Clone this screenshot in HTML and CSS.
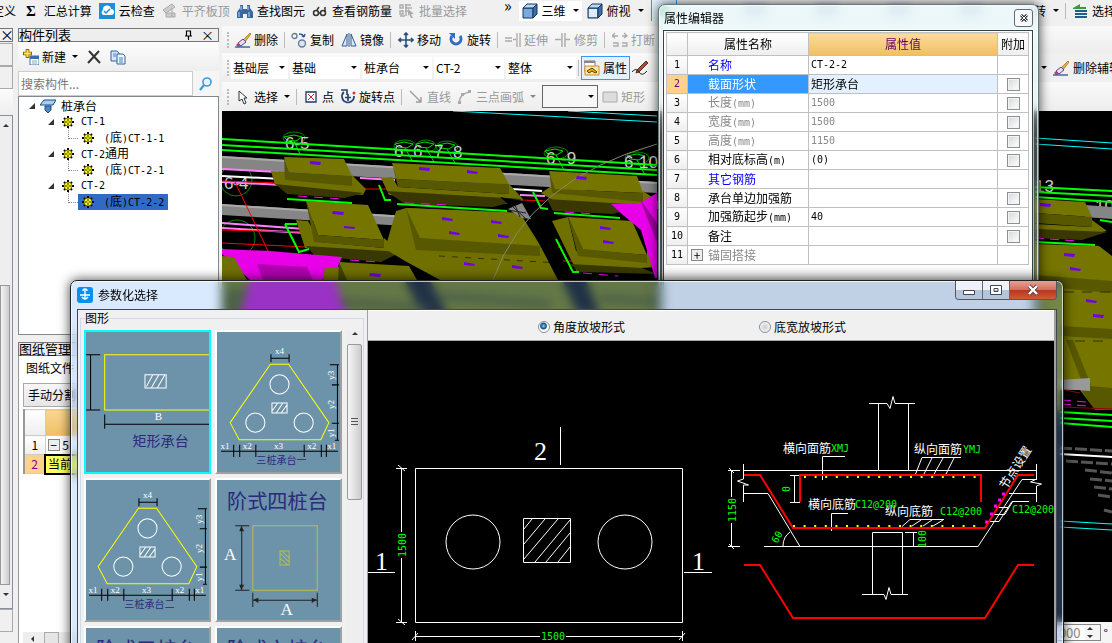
FILE: index.html
```html
<!DOCTYPE html>
<html lang="zh-CN">
<head>
  <meta charset="UTF-8">
  <meta name="viewport" content="width=device-width, initial-scale=1.0">
  <title>参数化选择</title>
  <link rel="stylesheet" href="styles.css">
</head>
<body>
  <!-- shared icons -->
  <svg width="0" height="0" class="defs">
    <symbol id="i-brush" viewBox="0 0 16 16"><path d="M15 1l-7 7 2 2 6-8z" fill="#e8b030" stroke="#8a6414" stroke-width=".6"/><path d="M8 7l3 3-5 4-3-3z" fill="#e7dff0" stroke="#56408a"/><path d="M3 11l3 3-3 1-2-2z" fill="#c33a7a"/><path d="M0 15h15" stroke="#2f5f9c" stroke-width="1.4"/></symbol>
    <symbol id="i-gear" viewBox="0 0 12 12"><path d="M6 0v12M0 6h12M2 2l8 8M10 2l-8 8" stroke="#000" stroke-width="2"/><circle cx="6" cy="6" r="4" fill="#ff0" stroke="#333" stroke-width=".6"/><path d="M6 3v6M3 6h6" stroke="#222"/><circle cx="6" cy="6" r="1" fill="#ff0"/></symbol>
    <symbol id="i-cube" viewBox="0 0 16 16"><path d="M1 5h10v10H1z" fill="#78aadb" stroke="#17365d"/><path d="M1 5l4-4h10l-4 4z" fill="#b9d8f4" stroke="#17365d"/><path d="M11 5l4-4v10l-4 4z" fill="#3c6fa8" stroke="#17365d"/></symbol>
    <symbol id="t-tri" viewBox="0 0 122 139">
      <path d="M53 32h18l40 58-8 17H22l-9-17z" fill="none" stroke="#ff0"/>
      <g fill="none" stroke="#fff"><circle cx="62" cy="52" r="9.5"/><circle cx="38" cy="90" r="9.5"/><circle cx="86" cy="90" r="9.5"/><path d="M54.500 70.500h15v10h-15zM55 78l5-7M59 80l6-9M64 80l5-7"/></g>
      <path d="M53 26h18M53.500 22v8M71.500 22v8M119.500 32v75M112 32.500h9M114 52.500h7M114 90.500h7M117 107.500h4M4 118.500h116M16.500 112v12M22.500 112v12M38.500 112v12M86.500 112v12M103.500 112v12M108.500 112v12" stroke="#000" fill="none"/>
      <g fill="#fff" font-size="9" font-family="Liberation Serif, serif" text-anchor="middle">
        <text x="62" y="22">x4</text><text x="8" y="116">x1</text><text x="30" y="116">x2</text><text x="61" y="116">x3</text><text x="94" y="116">x2</text><text x="114" y="116">x1</text>
        <text transform="translate(116 43) rotate(-90)">y3</text><text transform="translate(116 72) rotate(-90)">y2</text><text transform="translate(116 100) rotate(-90)">y1</text>
      </g>
    </symbol>
  </svg>

  <header class="toolbar top-bar">
    <button class="tool first">定义</button>
    <button class="tool sum"><b>Σ</b>汇总计算</button>
    <button class="tool"><svg viewBox="0 0 16 16"><path fill="#1c8fd6" d="M0 0h16v16H0z"/><path d="M4 12a3 3 0 0 1 0-5 4 4 0 0 1 8-1 3 3 0 0 1 0 6z" fill="#fff"/><path d="M5 8l2 2 4-4" stroke="#1c8fd6" fill="none" stroke-width="1.500"/></svg>云检查</button>
    <button class="tool off"><svg viewBox="0 0 16 16"><path d="M1 7l9-6 3 3-9 6zM4 10h9v4H4zM10 5v9" fill="#ccc" stroke="#aaa"/></svg>平齐板顶</button>
    <button class="tool"><svg viewBox="0 0 16 16"><path d="M3 2h3v4h4V2h3v3l3 4v6h-6v-4H6v4H0V9l3-4z" fill="#39679f"/><path d="M2 9v5M4 3v4M12 9v5M11 3v4" stroke="#b9d4f2"/></svg>查找图元</button>
    <button class="tool"><svg viewBox="0 0 16 16"><g fill="none" stroke="#333" stroke-width="1.500"><circle cx="4" cy="10" r="2.500"/><circle cx="11" cy="10" r="2.500"/><path d="M6 10h3M5 7l2-3M13 9V4"/></g></svg>查看钢筋量</button>
    <button class="tool off"><svg viewBox="0 0 16 16"><path d="M1 2h3v3H1zM1 8h3v3H1zM1 13h5M6 2h6M6 5h7M6 8h3M7 1v12" fill="none" stroke="#aaa" stroke-width="1.400"/><path d="M9 6l6 5-3 0 2 4-2 0-2-4-1 2z" fill="#aaa"/></svg>批量选择</button>
    <span class="more">»</span>
    <button class="tool drop view"><svg viewBox="0 0 16 16"><use href="#i-cube"/></svg>三维</button>
    <button class="tool drop"><svg viewBox="0 0 16 16"><use href="#i-cube"/><path d="M2 6h8v8H2z" fill="#dcecf9"/></svg>俯视</button>
    <button class="tool active" aria-label="动态观察"><svg viewBox="0 0 16 16"><circle cx="8" cy="8" r="6" fill="#2a9a5c"/></svg></button>
    <div class="blurry"><i></i><i></i><i></i><i></i><i></i></div>
    <div class="right-tools r1"><button class="tool drop">转</button><span class="sep"></span>
      <button class="tool"><svg viewBox="0 0 16 16"><path d="M1 5l7-4v3h6v2H1z" fill="#3b9a3b"/><path d="M3 8h12M3 11h12M3 14h12" stroke="#225c92" stroke-width="2"/></svg>选择</button></div>
  </header>

  <main class="workspace">
    <aside class="strip">
      <div class="strip-close">×</div>
      <div class="strip-row"></div><div class="strip-row"></div><div class="strip-row soft"></div>
      <div class="strip-scroll"><span class="up"></span><span class="thumb"></span><span class="down"></span></div>
      <div class="strip-row"></div>
    </aside>

    <aside class="panels">
      <section class="component-panel">
        <h2 class="panel-title">构件列表<span class="pin"><svg viewBox="0 0 10 10"><path d="M2 6h7M3.500 6V1h4v5M5.500 6v4" fill="none" stroke="#000" stroke-width="1.200"/></svg></span><span>×</span></h2>
        <div class="panel-tools">
          <button class="tool drop"><svg viewBox="0 0 16 16"><path d="M7 7h9v9H7z" fill="#fff" stroke="#3b6ea8"/><path d="M7 8.500h9" stroke="#3b6ea8" stroke-width="3"/><path d="M9 12h5M9 14h5" stroke="#8ab"/><path d="M4.500 0v9M0 4.500h9" stroke="#866400" stroke-width="3.600"/><path d="M4.500 1v7M1 4.500h7" stroke="#ffe34a" stroke-width="2"/></svg>新建</button>
          <button class="tool" aria-label="删除"><svg viewBox="0 0 16 16"><path d="M3 2l11 12M13 2L2 14" stroke="#333" stroke-width="2"/></svg></button>
          <button class="tool" aria-label="复制"><svg viewBox="0 0 16 16"><path d="M1 2h6l2 2v8H1z" fill="#d8e8f8" stroke="#2e63a0"/><path d="M7 5h6l2 2v8H7z" fill="#eef6ff" stroke="#2e63a0"/><path d="M9 9h4M9 11h4M9 13h4M3 5h3M3 7h3" stroke="#4a82bf"/></svg></button>
        </div>
        <div class="search">
          <input type="text" placeholder="搜索构件..." aria-label="搜索构件">
          <button aria-label="搜索"><svg viewBox="0 0 16 16"><circle cx="9" cy="6" r="4" fill="#e8f6ff" stroke="#3b9bd8" stroke-width="1.600"/><path d="M6 9l-4 5" stroke="#3b9bd8" stroke-width="2.200"/></svg></button>
        </div>
        <ul class="tree">
          <li><i class="open"></i><svg viewBox="0 0 16 14"><path d="M0 6l4-5h12l-3 5H0z" fill="#a9cdf0" stroke="#174a86"/><path d="M5 7h6v4l-3 3-3-3z" fill="#4d88c4" stroke="#174a86"/></svg>桩承台</li>
          <li class="l2"><i class="open"></i><svg viewBox="0 0 12 12"><use href="#i-gear"/></svg><span class="n">CT-1</span></li>
          <li class="l3"><svg viewBox="0 0 12 12"><use href="#i-gear"/></svg><span><span class="n">(</span>底<span class="n">)CT-1-1</span></span></li>
          <li class="l2"><i class="open"></i><svg viewBox="0 0 12 12"><use href="#i-gear"/></svg><span><span class="n">CT-2</span>通用</span></li>
          <li class="l3"><svg viewBox="0 0 12 12"><use href="#i-gear"/></svg><span><span class="n">(</span>底<span class="n">)CT-2-1</span></span></li>
          <li class="l2"><i class="open"></i><svg viewBox="0 0 12 12"><use href="#i-gear"/></svg><span class="n">CT-2</span></li>
          <li class="l3 picked"><svg viewBox="0 0 12 12"><use href="#i-gear"/></svg><span><span class="n">(</span>底<span class="n">)CT-2-2</span></span></li>
        </ul>
      </section>
      <section class="drawing-panel">
        <h2 class="panel-title">图纸管理</h2>
        <div class="tab">图纸文件</div>
        <div class="drawing-body">
          <button class="split">手动分割</button>
          <table>
            <tr class="head"><th></th><td></td></tr>
            <tr><th>1</th><td><span class="fold">−</span> 5</td></tr>
            <tr class="cur"><th>2</th><td>当前</td></tr>
          </table>
          <div class="hscroll"><i></i><b></b></div>
        </div>
      </section>
    </aside>

    <section class="viewport">
      <div class="toolbar bar-edit">
        <span class="grip"></span>
        <button class="tool"><svg viewBox="0 0 16 16"><use href="#i-brush"/></svg>删除</button><span class="sep"></span>
        <button class="tool"><svg viewBox="0 0 16 16"><g fill="none" stroke="#6a7f96" stroke-width="1.400"><circle cx="3.500" cy="4" r="2.500"/><circle cx="11" cy="11.500" r="3.500" fill="#dbe6f0"/><path d="M8 2q4 0 5 3M13 5l-2-1M13 5l1-3" stroke="#2460a8"/></g></svg>复制</button>
        <button class="tool"><svg viewBox="0 0 16 16"><path d="M1 14L6 2v12zM10 2l5 12h-5z" fill="#dce9f5" stroke="#2c5d96"/><path d="M8 1v14" stroke="#2c5d96"/></svg>镜像</button><span class="sep"></span>
        <button class="tool"><svg viewBox="0 0 16 16"><path d="M8 1v14M1 8h14M6 3l2-2 2 2M6 13l2 2 2-2M3 6L1 8l2 2M13 6l2 2-2 2" fill="none" stroke="#29517c" stroke-width="1.600"/></svg>移动</button>
        <button class="tool"><svg viewBox="0 0 16 16"><path d="M4 4a5 5 0 1 0 8 0" fill="none" stroke="#2e6fc4" stroke-width="3"/><path d="M1 1h6v6z" fill="#2e6fc4"/></svg>旋转</button><span class="sep"></span>
        <button class="tool off"><svg viewBox="0 0 16 16"><path d="M0 6h7M0 9h7M12 1v14M15 1v14M8 7.500h3" stroke="#aaa" stroke-width="1.300"/></svg>延伸</button>
        <button class="tool off"><svg viewBox="0 0 16 16"><path d="M0 7.500h6M10 7.500h5M7 1v14M10 1v14" stroke="#aaa" stroke-width="1.400"/></svg>修剪</button><span class="sep"></span>
        <button class="tool off"><svg viewBox="0 0 16 16"><path d="M0 4h6M3 1L0 4l3 2M15 4h-5M12 1l3 3-3 2M1 11h5v3H1M10 11h5v3h-5" fill="none" stroke="#aaa" stroke-width="1.300"/></svg>打断</button>
      </div>
      <div class="toolbar bar-layer">
        <span class="grip"></span>
        <span class="combo short"><select aria-label="楼层"><option>基础层</option></select></span>
        <span class="combo"><select aria-label="类别"><option>基础</option></select></span>
        <span class="combo"><select aria-label="构件类型"><option>桩承台</option></select></span>
        <span class="combo"><select aria-label="构件"><option>CT-2</option></select></span>
        <span class="combo"><select aria-label="部位"><option>整体</option></select></span>
        <span class="sep"></span>
        <button class="tool active"><svg viewBox="0 0 16 16"><path d="M0 1h11v10H0z" fill="#fff" stroke="#777"/><path d="M0 2h11" stroke="#888" stroke-width="2"/><path d="M1 6h14v9H1z" fill="#ffe2ae" stroke="#d98c1e"/><path d="M3 11l5-3 5 4-2 1-3-2-3 2z" fill="#e1b400" stroke="#554400"/></svg>属性</button>
        <button class="tool" aria-label="编辑钢筋"><svg viewBox="0 0 16 16"><path d="M14 1L5 10l-1 3 3-1 9-9z" fill="#b04a30" stroke="#532"/><path d="M0 12q4-5 7 0t8-1" fill="none" stroke="#222"/></svg></button>
        <div class="right-tools r2"><button class="tool drop" aria-label="更多"></button><button class="tool"><svg viewBox="0 0 16 16"><use href="#i-brush"/></svg>删除辅轴</button></div>
      </div>
      <div class="toolbar bar-draw">
        <span class="grip"></span>
        <button class="tool drop"><svg viewBox="0 0 16 16"><path d="M4 2v10l3-2 2 5 2-1-2-5h3z" fill="#fff" stroke="#333"/></svg>选择</button><span class="sep"></span>
        <button class="tool"><svg viewBox="0 0 16 16"><path d="M3 3h10v10H3z" fill="#fff" stroke="#1d3767" stroke-width="1.300"/><path d="M5 5l6 6M11 5l-6 6" stroke="#c22"/></svg>点</button>
        <button class="tool"><svg viewBox="0 0 16 16"><path d="M4 3a6 6 0 1 0 10 4M1 1h6v5M8 5v7M5 8.500h6" fill="none" stroke="#27466f" stroke-width="1.700"/><circle cx="14" cy="4" r="1.500" fill="#d33"/></svg>旋转点</button><span class="sep"></span>
        <button class="tool off"><svg viewBox="0 0 16 16"><path d="M2 2l11 11M13 8v5H8" fill="none" stroke="#999" stroke-width="1.300"/></svg>直线</button>
        <button class="tool off drop"><svg viewBox="0 0 16 16"><path d="M2 14Q3 4 13 3" fill="none" stroke="#aaa" stroke-width="1.500"/><path d="M1 12h3v3H1zM11 1h3v3h-3zM4 4h3v3H4z" fill="#aaa"/></svg>三点画弧</button>
        <span class="combo boxed"><select aria-label="画法"><option></option></select></span>
        <button class="tool off"><svg viewBox="0 0 16 16"><path d="M1 3h14v10H1z" fill="#ddd" stroke="#aaa"/></svg>矩形</button>
      </div>

      <!-- 3d model view -->
      <svg class="scene" viewBox="222 111 890 511" preserveAspectRatio="xMinYMin slice">
        <path fill="#000" d="M222 111h1200v900H222z"/>
        <path d="M453 111L657 122M568 111L657 116M1035 138l77 5M1035 144l77 5M1060 521l52 3M1060 527l52 3" stroke="#0ff"/>
        <g fill="none" stroke="#080"><ellipse cx="294" cy="138" rx="11" ry="6"/><ellipse cx="405" cy="146" rx="11" ry="6"/><ellipse cx="426" cy="146" rx="10" ry="6"/><ellipse cx="447" cy="147" rx="11" ry="6"/><ellipse cx="556" cy="153" rx="12" ry="6"/><ellipse cx="637" cy="158" rx="12" ry="6"/><circle cx="236" cy="180" r="16"/><circle cx="237" cy="238" r="18"/></g>
        <g fill="none" stroke="#0d0"><path d="M284 137l10-2 8 2-6 4-9-1zM294 141l6 13M395 144l9-2 9 2-6 4-9-1zM405 148l8 14M416 144l9-2 9 2-6 4-9-1zM426 148l8 14M438 145l9-2 8 2-6 4-9-1zM447 149l8 14M545 151l10-2 8 2-6 4-9-1zM556 155l8 15M627 156l10-2 8 2-6 4-9-1zM637 160l8 15"/></g>
        <g fill="#ccc" font-size="17" font-family="Liberation Sans, sans-serif">
          <text x="285" y="149">6-5</text><text x="224" y="189">6-4</text><text x="394" y="157">6</text><text x="413" y="157">6</text><text x="434" y="157">7</text><text x="453" y="158">8</text><text x="546" y="164">6</text><text x="561" y="164">-9</text><text x="624" y="168">6-10</text><text x="1035" y="192">13</text><text x="1095" y="212">10</text>
        </g>
        <path d="M222 156l435 26v11l-435-24z" fill="#858585"/><path d="M222 156l435 26v2l-435-26z" fill="#aaa"/>
        <path d="M222 204l184 12v10l-184-11z" fill="#858585"/><path d="M222 204l184 12v2l-184-12z" fill="#aaa"/>
        <path d="M222 139l435 26M222 145l435 25M222 150l435 25M1035 187l77 4M1035 192l77 4M1035 197l77 5" stroke="#0f0" stroke-width="2"/>
        <path d="M222 169l56 3M222 182l60 3M222 223l83 6M360 178l35 2M520 195l25 1M222 228l85 5" stroke="#ff80ff" stroke-width="2"/>
        <path d="M222 176l60 3M512 189l30 2" stroke="#fff" stroke-width="2"/>
        <path d="M222 181l60 2M365 189h28M222 230l80 2M222 243l85 4M235 182l33 69M523 200l22 1M547 247h15M552 261h20" stroke="red"/>

        <!-- upper footings -->
        <path d="M271 171l13 1 8 7 60 5 0-9 14 14-3 6-88-10z" fill="#707000"/><path d="M275 184l89 9-20 5-57-4z" fill="#383800"/>
        <path d="M284 157l60 2 8 17-63-4z" fill="#757500"/><path d="M284 157l5 15 63 4v10l-67-6z" fill="#585800"/>
        <path d="M381 178l11-1 6 10 111 7v-10l14 15-1 6-133-10z" fill="#707000"/><path d="M386 191l137 8-30 8-88-3z" fill="#383800"/>
        <path d="M392 163l108 5 9 16-112-5z" fill="#757500"/><path d="M392 163l5 16 112 5v10l-111-7z" fill="#585800"/>
        <path d="M541 193l12-8 90 15v-9l15 10v8l-104-8z" fill="#707000"/><path d="M547 199l96 6-30 9-60-3z" fill="#383800"/>
        <path d="M549 171l88 5 6 17-88-4z" fill="#757500"/><path d="M549 171l6 18 88 4v9l-91-9z" fill="#585800"/>
        <!-- middle footings -->
        <path d="M296 220l12 1 12 21 64 6v-10l17 15-96-5z" fill="#707000"/><path d="M306 246l95 6-20 10-66-6z" fill="#383800"/>
        <path d="M306 201l62 4 16 35-66-5z" fill="#757500"/><path d="M306 201l12 34 66 5v8l-70-6z" fill="#585800"/>
        <path d="M396 211l10-3 114 5 42 67H440l-35-19-20-12z" fill="#707000"/>
        <path d="M406 208l114 5 20 36-124-8z" fill="#757500"/><path d="M406 208l14 30 120 8v10l-124-6z" fill="#585800"/>
        <path d="M439 256l120 7" stroke="#333300" stroke-dasharray="6 7"/>
        <path d="M552 221l16-4 8 34 71 6v-10l10 20-80 5z" fill="#707000"/><path d="M570 264l72 4 15 6-78-2z" fill="#383800"/>
        <path d="M568 217l64 4 15 34-64-5z" fill="#757500"/><path d="M568 217l15 32 64 6v8l-69-7z" fill="#585800"/>
        <!-- lower row -->
        <path d="M222 280h440v60H222z" fill="#5d6000"/><path d="M222 290l60-4 60 30v24H222z" fill="#3c4400"/><path d="M400 272l26 0 30 60h-24z" fill="#000"/><path d="M250 280h85l14 40h-110z" fill="#a800b0"/><path d="M562 280h24l14 34h-22z" fill="#000"/>
        <path d="M340 302l90 6M440 296l110 8M600 298l60 4" stroke="#2c3000" stroke-width="5"/>
        <path d="M222 249l48 2 72 6-5 12-15 11h-72l-28-26z" fill="#e800e8"/><path d="M257 264l50 3 6 13h-50z" fill="#b000b0"/>
        <path d="M222 256l12 1 13 23h-25zM339 262l70 4 8 14h-94l2-13h14z" fill="#707000"/><path d="M339 262l8 18h-9z" fill="#444400"/>
        <path d="M611 204l29-1 17-10v85h-2l-14-48-18-15z" fill="#e800e8"/><path d="M640 199l17 24v20z" fill="#a000a0"/>
        <path d="M500 197l24 4 22 15 24 64h-12l-30-58z" fill="#000"/><path d="M508 209l14-6 9 16-9-1z" fill="#888"/><path d="M512 206l14 13M508 210l18 3M515 205l5 12" stroke="#222"/>
        <path d="M287 199l65 4M397 204l110 7M285 224l14 28 10-3M285 224h12M379 185l6 15 6 0M533 192l8 16 7 1M554 213l66 5M556 239l17 33h6" fill="none" stroke="#0f0" stroke-width="2"/>
        <path d="M298 196l44 3M405 203l45 2M565 212l30 2M350 260l28 2M583 273l35 3" stroke="#f0f" stroke-dasharray="9 7"/>
        <path d="M493 280q35-100 164-136" fill="none" stroke="#888870"/>
        <path d="M310 161l11 1-1 3-10-1zM419 167l11 1-1 3-10-1zM467 170l11 2-1 2-10-1zM577 176l10 1-1 3-10-1zM333 211l11 1-1 3-11-1zM344 226l11 1-1 2-10-1zM442 217l11 2-1 2-10-1zM491 220l11 2-1 2-10-1zM449 231l11 2-1 2-10-1zM498 234l11 2-1 2-10-1zM464 262l11 2-1 2-10-1zM512 265l11 2-1 2-10-1zM600 226l11 2-1 2-10-1zM603 240l11 2-1 2-10-1zM370 273l11 1-1 3-11-1z" fill="#7000e8"/>

        <!-- right part of the model -->
        <path d="M1085 205l27 2v12l-27-2z" fill="#858585"/>
        <path d="M1035 199l50 3 7 15-57-4z" fill="#757500"/><path d="M1035 213l57 4v10l-57-4z" fill="#585800"/>
        <path d="M1035 224l57 3 0-7 15 11-20 4-52-6z" fill="#707000"/><path d="M1035 229l72 3-25 8-47-2z" fill="#383800"/>
        <path d="M1035 244l64 2 13 10v154h-77z" fill="#757500"/><path d="M1035 275l77 6v12l-77-7zM1060 326l52 3v10l-52-3zM1066 340l7 0 18 45-8 0zM1078 385l34 3v22h-18z" fill="#585800"/>
        <path d="M1060 380l30-2v13l-30-2z" fill="#999"/><path d="M1060 390h20l15 20h-35z" fill="#000"/>
        <path d="M1035 238l42 3M1062 400l24 2M1062 404l26 2" stroke="#f0f" stroke-dasharray="9 6"/>
        <path d="M1035 242l60 3M1100 220l12 2M1060 412l52 3M1060 418l52 3M1060 423l52 4" stroke="#0f0" stroke-width="2"/>
        <path d="M1060 407l52 2M1065 390l15 3" stroke="#900"/>
        <path d="M1064 292h48M1075 341h34" stroke="#333300" stroke-dasharray="10 8"/>
        <path d="M1040 203l11 1-1 3-10-1zM1064 253l11 1-1 3-10-1zM1070 267l11 2-1 2-10-1zM1086 299l11 2-1 2-10-1zM1093 314l11 1-1 3-10-1z" fill="#7000e8"/>
        <path d="M1060 448l52 3M1066 461l46 3M1085 470l27 3M1090 479l22 2M1094 487l18 2M1098 495l14 2M1104 510l8 2" stroke="#555" stroke-width="3" stroke-dasharray="12 3"/>
        <path d="M1060 454l52 3" stroke="#fff" stroke-width="2"/>
      </svg>
      <footer class="status"><input type="text" value="0.000" aria-label="旋转角度"><span class="spin"><i class="up"></i><i class="down"></i></span>°</footer>
    </section>
  </main>

  <!-- floating property editor -->
  <section class="window props">
    <h2 class="win-title">属性编辑器<button class="win-close" aria-label="关闭"><svg viewBox="0 0 8 8"><path d="M1 1l6 6M7 1L1 7" stroke="#333" stroke-width="3"/><path d="M1 1l6 6M7 1L1 7" stroke="#fff"/></svg></button></h2>
    <div class="props-body">
      <table>
        <thead><tr><th class="no"></th><th>属性名称</th><th class="val hot">属性值</th><th class="add">附加</th></tr></thead>
        <tbody>
          <tr><th>1</th><td class="blue">名称</td><td class="n">CT-2-2</td><td></td></tr>
          <tr class="sel"><th>2</th><td>截面形状</td><td>矩形承台</td><td><input type="checkbox" aria-label="截面形状"></td></tr>
          <tr class="dim"><th>3</th><td>长度<span class="n">(mm)</span></td><td class="n">1500</td><td><input type="checkbox" aria-label="长度"></td></tr>
          <tr class="dim"><th>4</th><td>宽度<span class="n">(mm)</span></td><td class="n">1500</td><td><input type="checkbox" aria-label="宽度"></td></tr>
          <tr class="dim"><th>5</th><td>高度<span class="n">(mm)</span></td><td class="n">1150</td><td><input type="checkbox" aria-label="高度"></td></tr>
          <tr><th>6</th><td>相对底标高<span class="n">(m)</span></td><td class="n">(0)</td><td><input type="checkbox" aria-label="相对底标高"></td></tr>
          <tr><th>7</th><td class="blue">其它钢筋</td><td></td><td></td></tr>
          <tr><th>8</th><td>承台单边加强筋</td><td></td><td><input type="checkbox" aria-label="承台单边加强筋"></td></tr>
          <tr><th>9</th><td>加强筋起步<span class="n">(mm)</span></td><td class="n">40</td><td><input type="checkbox" aria-label="加强筋起步"></td></tr>
          <tr><th>10</th><td>备注</td><td></td><td><input type="checkbox" aria-label="备注"></td></tr>
          <tr class="dim"><th>11</th><td class="group"><span class="fold">+</span>锚固搭接</td><td></td><td></td></tr>
        </tbody>
      </table>
    </div>
  </section>

  <!-- parametric shape dialog -->
  <section class="window dialog">
    <h2 class="win-title">
      <svg viewBox="0 0 16 16"><rect width="16" height="16" rx="3" fill="#0a8ef0"/><path d="M8 3v9M3 8h10M6 4a2 2 0 0 1 4 0M5 10q3 4 6 0" fill="none" stroke="#fff" stroke-width="1.400"/></svg>
      参数化选择
      <span class="win-buttons"><button aria-label="最小化"><svg viewBox="0 0 14 12"><path d="M1.500 6.500h11v4h-11z" fill="#fff" stroke="#445"/></svg></button><button aria-label="最大化"><svg viewBox="0 0 14 12"><path d="M1.500 1.500h11v9h-11zM5 4.500h4v3H5z" fill="#fff" stroke="#445" fill-rule="evenodd"/></svg></button><button class="x" aria-label="关闭"><svg viewBox="0 0 14 12"><path d="M3 2l8 8M11 2l-8 8" stroke="#524048" stroke-width="4"/><path d="M3 2l8 8M11 2l-8 8" stroke="#fff" stroke-width="2.400"/></svg></button></span>
    </h2>
    <div class="dialog-body">
      <fieldset class="shapes">
        <legend>图形</legend>
        <div class="thumbs">
          <button class="chosen"><svg viewBox="0 0 122 139">
            <path d="M124 22.500H18.500v55H124" fill="none" stroke="#ff0"/><path d="M4.500 22v55M0 22.500h14M0 77.500h14M18.500 82v14M18 91.500h106" stroke="#000"/>
            <path d="M58.500 42.500h21v13h-21zM60 54l6-11M65 55l7-12M71 55l7-12" fill="none" stroke="#fff"/>
            <text x="72" y="87" font-size="11" fill="#fff" text-anchor="middle" font-family="Liberation Serif, serif">B</text><text class="cap" x="46" y="113" font-size="14">矩形承台</text></svg></button>
          <button><svg viewBox="0 0 122 139"><use href="#t-tri"/><text class="cap" x="39" y="131" font-size="10">三桩承台一</text></svg></button>
          <button><svg viewBox="1 4 122 139"><use href="#t-tri" width="122" height="139"/><text class="cap" x="39" y="131" font-size="10">三桩承台二</text></svg></button>
          <button><svg viewBox="0 0 122 139"><text class="cap" x="10" y="29" font-size="20">阶式四桩台</text>
            <path d="M35.500 45.500h64v64h-64zM62.500 70.500h9v14h-9zM63 73l8 8M63 78l7 6M65 71l6 6" fill="none" stroke="#b8c04a"/>
            <path d="M18 45.500h14M18 109.500h14M24.500 46v63M35.500 112v14M99.500 112v14M36 119.500h63" stroke="#222"/><path d="M22 51l2-5 3 5zM22 104l2 5 3-5zM41 117l-5 2 5 3zM94 117l5 2-5 3z" fill="#222"/>
            <g font-size="17" fill="#fff" font-family="Liberation Serif, serif"><text x="7" y="79">A</text><text x="63" y="134">A</text></g></svg></button>
          <button><svg viewBox="0 0 122 139"><text class="cap" x="10" y="29" font-size="20">阶式五桩台</text></svg></button>
          <button><svg viewBox="0 0 122 139"><text class="cap" x="10" y="29" font-size="20">阶式六桩台</text></svg></button>
        </div>
        <div class="vscroll"><span class="up"></span><span class="thumb"></span></div>
      </fieldset>
      <div class="preview">
        <div class="modes">
          <label><input type="radio" name="slope" checked>角度放坡形式</label>
          <label><input type="radio" name="slope">底宽放坡形式</label>
        </div>
        <svg class="drawing" viewBox="368 341 686 340" preserveAspectRatio="xMinYMin slice">
          <!-- plan -->
          <g fill="none" stroke="#fff">
            <path d="M415.500 468.500h267v154h-267zM560.500 427v38M368 572.500h27M684 572.500h28M401.500 468v64M401.500 558v65M396 468.500h11M396 622.500h11M398 465l7 6M398 619l7 6M415 636.500h125M566 636.500h117M415.500 631v10M682.500 631v10M412 640l6-7M679 640l6-7"/>
            <circle cx="473" cy="542" r="27"/><circle cx="625" cy="542" r="27"/>
            <path d="M523.500 518.500h47v44h-47zM524 529l8-10M524 544l21-25M524 559l34-40M535 562l35-42M546 562l24-29M558 562l12-15"/>
          </g>
          <g fill="#fff" font-size="26" font-family="Liberation Serif, serif"><text x="534" y="460">2</text><text x="375" y="570">1</text><text x="692" y="570">1</text></g>
          <!-- section -->
          <g fill="none" stroke="#fff">
            <path d="M878.500 403v67M908.500 403v67M869 403.500h18l3 5 3-12 2 7h20"/>
            <path d="M743 470.500h294M743.500 464v15l-6 2 11 4-5 0v17M743 493.500h25l32 53M764 546.500h214l44-67h15M1009 493.500h28M1036.500 464v15l-6 3 11 2-5 2v16"/>
            <path d="M731.500 470v27M731.500 523v24M728 470.500h12M728 546.500h12M729 468l5 5M729 544l5 5"/>
            <path d="M794.500 475v27M790 475.500h10M790 502.500h10M783 546q0-9 7-14"/>
            <path d="M872.500 594v-61.500h30v61.500M862 594.500h22l2 5 3-12 2 7h17M905 532.500h12M913.500 532v15M909 546.500h8"/>
            <path d="M845 456.500h-22.500V480M848 513.500h-16.500V531M961 457.500h-39l-7 18M932 458l-9 18M943 458l-10 18M954 458l-9 18M944 519.500h-34l-8 7M921 520l-9 6M932 520l-9 6M943 520l-10 6"/>
            <path d="M996 507.500h12M992 514.500h13M987 521.500h12l13-20h17M1005 514l8-13"/>
          </g>
          <g fill="none" stroke="#f00" stroke-width="2"><path d="M744 475h16l33 53h192l33-53h16M800 502v-27h181v27M744 565h16l33 53h192l33-53h16"/></g>
          <path d="M804 477h176M793 526h190" stroke="#ff0" stroke-width="2" stroke-dasharray="2 8.600"/>
          <path d="M1002 494h3M998 500h3M994 506h3M990 514h3M985 522h3" stroke="#f0f" stroke-width="3"/>
          <g class="cad-cn"><text x="783" y="453">横向面筋</text><text x="914" y="454">纵向面筋</text><text x="808" y="509">横向底筋</text><text x="885" y="516">纵向底筋</text><text transform="translate(1006 490) rotate(-57)">节点设置</text></g>
          <g class="cad-n"><text x="831" y="452">XMJ</text><text x="963" y="453">YMJ</text><text x="855" y="508">C12@200</text><text x="940" y="515">C12@200</text><text x="1012" y="513">C12@200</text><text x="541" y="640">1500</text>
            <text transform="translate(406 557) rotate(-90)">1500</text><text transform="translate(736 522) rotate(-90)">1150</text><text transform="translate(790 492) rotate(-90)">0</text><text transform="translate(777 544) rotate(-60)">60</text><text transform="translate(926 548) rotate(-90)">100</text></g>
        </svg>
      </div>
    </div>
  </section>
</body>
</html>
```
FILE: styles.css
```css
* { box-sizing: border-box; }
body {
  margin: 0;
  height: 100vh;
  overflow: hidden;
  display: flex;
  flex-direction: column;
  background: #f0f0f0;
  color: #000;
  font: 12px/16px "Noto Sans CJK SC", sans-serif;
}
.defs { position: absolute; }
button, input, select { font: inherit; color: inherit; margin: 0; }
h2 { margin: 0; font: inherit; }
.n { font-family: "DejaVu Sans Mono", monospace; font-size: 10px; }

/* toolbars */
.toolbar {
  display: flex;
  align-items: center;
  white-space: nowrap;
  overflow: hidden;
  position: relative;
}
.tool {
  display: flex;
  align-items: center;
  gap: 4px;
  flex: none;
  border: 0;
  background: none;
  padding: 0;
}
.tool svg { width: 16px; height: 16px; flex: none; }
.off { color: #999; }
.drop::after, .combo::after {
  content: "";
  border: 3px solid transparent;
  border-top-color: #000;
  border-bottom: 0;
  margin-left: 3px;
}
.off.drop::after { border-top-color: #888; }
.sep { width: 1px; height: 16px; background: #bbb; flex: none; }
.grip { width: 2px; height: 16px; border-left: 2px dotted #bbb; flex: none; }
.top-bar { height: 21px; flex: none; gap: 7px; }
.top-bar .first { margin-left: -8px; margin-right: 3px; }
.sum b { font: bold 15px/16px "Liberation Serif", serif; margin-right: 4px; }
.more { font-size: 16px; margin: -12px 0 0 30px; }
.view { background: #fff; padding: 2px 3px; margin-right: -2px; }
.top-bar .active { border: 1px solid #3399ff; background: #e5f3ff; padding: 4px; }
.blurry { display: flex; gap: 50px; padding-left: 60px; filter: blur(3px); }
.blurry i { width: 22px; height: 11px; background: #9aaed0; }
.right-tools { position: absolute; top: 0; display: flex; gap: 6px; height: 100%; align-items: center; background: #f0f0f0; }
.r1 { left: 1034px; gap: 6px; }
.r2 { left: 816px; gap: 6px; }
.bar-edit { height: 27px; padding-left: 5px; gap: 6px; }
.bar-edit .tool:nth-of-type(n+3) { margin-left: 1px; }
.bar-edit .tool { gap: 3px; }
.bar-layer, .bar-draw, .bar-edit { background: linear-gradient(#fafafa, #ededed); }
.bar-layer { height: 29px; padding-left: 5px; gap: 2px; }
.bar-draw { height: 29px; padding-left: 5px; gap: 6px; }
.bar-draw .tool { gap: 3px; }
.combo { position: relative; display: flex; align-items: center; width: 70px; height: 22px; background: #fff; }
.combo.short { width: 57px; }
.combo select { appearance: none; border: 0; background: none; padding: 0 2px; width: 100%; height: 100%; outline: 0; }
.combo::after { position: absolute; right: 3px; }
.combo.boxed { width: 56px; height: 23px; border: 1px solid #666; margin-right: -2px; background: #f7f7f7; }
.bar-layer .active { border: 1px solid #3399ff; background: #e5f1fc; padding: 0 2px; height: 24px; gap: 3px; }

/* layout */
.workspace { flex: 1; min-height: 0; display: flex; }
.strip { width: 13px; flex: none; padding-top: 7px; display: flex; flex-direction: column; }
.strip-close { border: 1px solid #777; border-left: 0; height: 14px; line-height: 11px; font-size: 14px; margin-bottom: 1px; }
.strip-row { border: 1px solid #aaa; border-left: 0; height: 23px; flex: none; }
.soft { height: 26px; border: 0; background: linear-gradient(#fcfcfc, #eee); }
.strip-scroll { height: 494px; flex: none; border: 1px solid #8a8fa0; border-left: 0; display: flex; flex-direction: column; align-items: center; background: #eee; }
.up, .down { border: 3px solid transparent; }
.up { border-bottom-color: #333; border-top: 0; margin-top: 8px; }
.down { border-top-color: #333; border-bottom: 0; }
.strip-scroll .thumb { width: 10px; height: 300px; margin: 158px 0 8px; border: 1px solid #999; background: linear-gradient(90deg, #f4f4f4, #ccc); align-self: flex-start; }
.panels { width: 201px; margin-left: 5px; flex: none; padding-top: 7px; }
.panel-title { display: flex; gap: 8px; border: 1px solid #777; height: 14px; line-height: 12px; font-size: 13px; padding-right: 4px; background: #eee; }
.pin { margin-left: auto; }
.pin svg { width: 10px; height: 10px; }
.panel-tools { display: flex; gap: 8px; height: 29px; padding-left: 5px; background: linear-gradient(#fdfdfd, #eee); }
.panel-tools .drop { gap: 3px; }
.search { display: flex; height: 25px; background: #f5f5f5; }
.search input { width: 176px; border: 1px solid #ccc; padding: 0 2px; outline: 0; }
.search input::placeholder { color: #777; }
.search button { flex: 1; border: 0; background: none; padding: 4px 5px; }
.search svg { width: 16px; height: 16px; display: block; }
.tree { margin: 0; padding: 1px 0 0 10px; list-style: none; height: 239px; background: #fff; border: 1px solid #828790; }
.tree li { display: flex; align-items: center; height: 16px; gap: 5px; width: max-content; }
.tree svg { width: 16px; height: 14px; }
.tree li:not(:first-child) svg { width: 12px; height: 12px; }
.open { border: 3px solid; border-color: transparent #333 #333 transparent; }
.tree .l2 { padding-left: 19px; gap: 7px; }
.tree .l2 svg { margin-left: 1px; }
.tree .l3 { margin-left: 49px; padding: 0 4px; gap: 10px; position: relative; }
.tree .l3::before { content: ""; position: absolute; left: -10px; top: -2px; width: 9px; height: 10px; border: dotted #888; border-width: 0 0 1px 1px; }
.picked { background: #316ac5; }
.drawing-panel { margin-top: 7px; }
.tab { height: 25px; padding: 4px 7px; background: #fff; border-left: 1px solid #999; }
.drawing-body { border-left: 1px solid #999; padding: 2px 0 0 4px; background: #fff; }
.split { height: 24px; width: 100%; text-align: left; border: 1px solid #aaa; background: linear-gradient(#f6f6f6, #e6e6e6); padding: 0 4px; }
.drawing-body table { border-collapse: collapse; background: #fff; width: 100%; border-left: 2px solid #999; margin-top: 2px; }
.drawing-body th { width: 21px; height: 19px; padding: 0; border: 1px solid #ccc; background: linear-gradient(#fff, #eee); font-weight: normal; }
.drawing-body td { padding: 0 2px; border: 1px solid #ccc; }
.drawing-body .head th { height: 26px; }
.head td { background: linear-gradient(#f9d694, #f0c064); }
.drawing-body .cur th { background: #ffd28c; color: #808; }
.drawing-body .cur td { background: #ffff60; border: 2px solid #000; }
.fold { display: inline-block; width: 12px; height: 12px; border: 1px solid #888; background: #eee; line-height: 10px; text-align: center; }
.hscroll { background: #eee; height: 14px; margin-top: 157px; display: flex; align-items: center; gap: 10px; padding-left: 8px; }
.hscroll i { border: 3px solid transparent; border-right-color: #333; border-left: 0; }
.hscroll b { width: 15px; height: 14px; border: 1px solid #aaa; background: #e5e5e5; }
.viewport { flex: 1; min-width: 0; margin-left: 3px; padding-top: 5px; display: flex; flex-direction: column; }
.scene { flex: 1; width: 100%; min-height: 0; display: block; }
.status { height: 21px; display: flex; align-items: center; justify-content: flex-end; padding-right: 4px; gap: 3px; background: #f5f5f5; }
.status input { width: 60px; height: 17px; border: 1px solid #888; border-right: 0; text-align: right; font-size: 13px; color: #888; margin-right: -3px; padding-right: 4px; }
.spin { width: 16px; height: 17px; border: 1px solid #888; border-left: 0; display: flex; flex-direction: column; justify-content: space-between; padding: 2px; }
.spin i { margin: 0; width: 0; }

/* windows */
.window {
  position: absolute;
  border: 1px solid #222;
  border-radius: 7px 7px 0 0;
  box-shadow: 0 0 12px rgba(0, 0, 0, .75), inset 0 0 0 1px rgba(255, 255, 255, .7);
  backdrop-filter: blur(5px);
}
.win-title { display: flex; align-items: center; gap: 5px; }
.props { left: 658px; top: 4px; width: 381px; height: 320px; padding: 0 5px 0 4px; background: linear-gradient(rgba(235, 250, 252, .8), rgba(225, 242, 244, .6) 90px, rgba(225, 242, 244, .3) 130px); border-color: #677; }
.props .win-title { height: 25px; padding-left: 1px; }
.win-close { margin-left: auto; width: 19px; height: 18px; border: 1px solid #667; border-radius: 3px; background: rgba(255, 255, 255, .5); padding: 0; }
.win-close svg { width: 8px; height: 8px; display: block; margin: auto; }
.props-body { border: 1px solid #344; padding: 1px 3px 3px 2px; background: linear-gradient(#fff 235px, #ddd 250px); height: 290px; outline: 1px solid rgba(255, 255, 255, .6); }
.props table { border-collapse: collapse; width: 100%; table-layout: fixed; background: #fff; }
.props th, .props td { height: 19px; padding: 0; border: 1px solid #c0c0c0; font-weight: normal; line-height: 14px; white-space: nowrap; }
.props thead th { height: 23px; background: linear-gradient(#fff, #eee); }
.props tbody th { background: linear-gradient(#fff, #eee); font-family: "DejaVu Sans Mono", monospace; font-size: 10px; }
.props .no { width: 21px; }
.props .val { width: 189px; }
.props .add { width: 31px; }
.props thead .hot { background: linear-gradient(#fbdc9e, #f0bf60); color: #606; }
.props td:nth-child(2) { padding-left: 20px; }
.props td:nth-child(3) { padding-left: 2px; }
.props td:nth-child(4) { text-align: center; }
.props .blue { color: #00f; }
.props .dim td { color: #888; }
.props .sel th { background: #ffd28c; color: #606; }
.props .sel td:nth-child(2) { background: #3399ff; color: #fff; }
.props .sel td:nth-child(3) { background: #e2f0ff; }
.props td.group { padding-left: 3px; }
.group .fold { margin-right: 5px; color: #000; }
.props input { appearance: none; display: block; margin: 0 auto; width: 13px; height: 13px; border: 1px solid #8e8f8f; background: linear-gradient(135deg, #d4d7dc, #fff); box-shadow: inset 0 0 0 1px #f4f4f4; }

.dialog { left: 70px; right: 48px; top: 280px; bottom: -20px; padding: 0 6px; background: rgba(120, 180, 255, .28); display: flex; flex-direction: column; }
.dialog .win-title { height: 28px; flex: none; }
.dialog .win-title > svg { width: 16px; height: 16px; }
.win-buttons { display: flex; align-self: flex-start; margin-left: auto; border: 1px solid #556; border-top: 0; border-radius: 0 0 4px 4px; overflow: hidden; }
.win-buttons button { width: 27px; height: 18px; border: 0; border-right: 1px solid #667; padding: 0; background: linear-gradient(rgba(255, 255, 255, .7) 50%, rgba(170, 190, 210, .6) 50%); }
.win-buttons svg { width: 14px; height: 12px; display: block; margin: auto; }
.win-buttons .x { width: 46px; border: 0; background: linear-gradient(#e3a294 0, #d2705c 48%, #b9341c 50%, #cf5a38); }
.dialog-body { flex: 1; min-height: 0; display: flex; border: 1px solid #445; background: #f0f0f0; }
.shapes { position: relative; display: flex; width: 284px; flex: none; min-width: 0; gap: 5px; margin: 0 3px 0 2px; padding: 4px 3px 0; border: 1px solid #d0dbe8; border-bottom: 0; overflow: hidden; }
.shapes legend { padding: 0; margin-left: 1px; }
.thumbs { display: grid; grid-template-columns: 127px 127px; gap: 4px; align-content: start; }
.thumbs button { height: 144px; padding: 0; border: 2px solid; border-color: #fff #a0a0a0 #a0a0a0 #fff; background: #6c93a9; overflow: hidden; }
.thumbs .chosen { border-color: #0ff; }
.thumbs svg { display: block; width: 100%; height: 100%; }
.cap { fill: #2b2a7c; }
.vscroll { width: 15px; display: flex; flex-direction: column; align-items: center; background: #eee; }
.vscroll .up { margin: 2px 0 9px; }
.vscroll .thumb { width: 15px; height: 156px; border: 1px solid #999; border-radius: 2px; background: repeating-linear-gradient(#555 0 1px, transparent 1px 3px) center / 7px 8px no-repeat, linear-gradient(90deg, #f6f6f6, #ccc); }
.preview { flex: 1; min-width: 0; display: flex; flex-direction: column; border-left: 1px solid #a0a0a0; border-right: 2px solid #a0a0a0; }
.modes { height: 31px; flex: none; display: flex; justify-content: center; align-items: center; gap: 134px; padding: 2px 38px 0 0; border-top: 1px solid #fff; border-bottom: 1px solid #aaa; }
.modes label { display: flex; align-items: center; gap: 3px; }
.modes input { appearance: none; width: 12px; height: 12px; border: 1px solid #8a8f94; border-radius: 50%; background: radial-gradient(#ccc, #f4f4f4 70%); }
.modes input:checked { background: radial-gradient(circle at 45% 40%, #7fd5ff 0, #134f80 35%, #fff 50%); }
.drawing { flex: 1; width: 100%; min-height: 0; display: block; background: #000; }
.cad-cn { fill: #fff; font-size: 12px; }
.cad-n { fill: #0f0; font: 10px "DejaVu Sans Mono", monospace; }
```
